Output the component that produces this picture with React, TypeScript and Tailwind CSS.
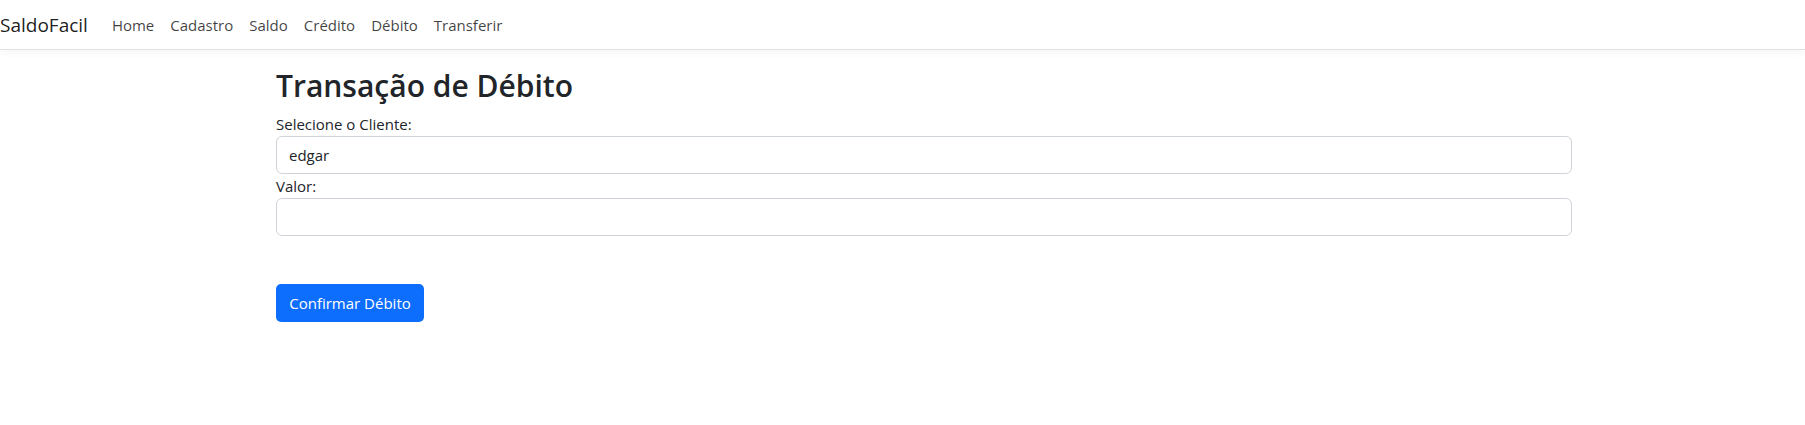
const links = ["Home", "Cadastro", "Saldo", "Crédito", "Débito", "Transferir"];

export default function App() {
	return (
		<div className="min-h-[425px] bg-white text-[#212529] font-['Open_Sans',sans-serif]">
			<nav className="flex h-[50px] items-center border-b border-[#dee2e6] shadow-[0_3px_8px_rgba(0,0,0,0.04)]">
				<a href="#" className="mr-4 text-[19px] leading-[30px] text-black/90">
					SaldoFacil
				</a>
				<ul className="flex">
					{links.map((link) => (
						<li key={link}>
							<a href="#" className="block px-2 text-[15px] leading-6 text-black/75">
								{link}
							</a>
						</li>
					))}
				</ul>
			</nav>

			<main className="ml-[276px] w-[1296px] pt-[17px]">
				<h2 className="mb-2 text-[30px] font-semibold leading-[37px]">Transação de Débito</h2>

				<label className="block text-[15px] leading-6">Selecione o Cliente:</label>
				<input
					type="text"
					defaultValue="edgar"
					className="block h-[38px] w-full rounded-[6px] border border-[#ced4da] px-3 text-[15px] text-[#212529] outline-none"
				/>

				<label className="block text-[15px] leading-6">Valor:</label>
				<input
					type="text"
					className="block h-[38px] w-full rounded-[6px] border border-[#ced4da] px-3 text-[15px] outline-none"
				/>

				<button className="mt-12 h-[38px] w-[148px] rounded-[5px] bg-[#0d6efd] text-[15px] text-white">
					Confirmar Débito
				</button>
			</main>
		</div>
	);
}
